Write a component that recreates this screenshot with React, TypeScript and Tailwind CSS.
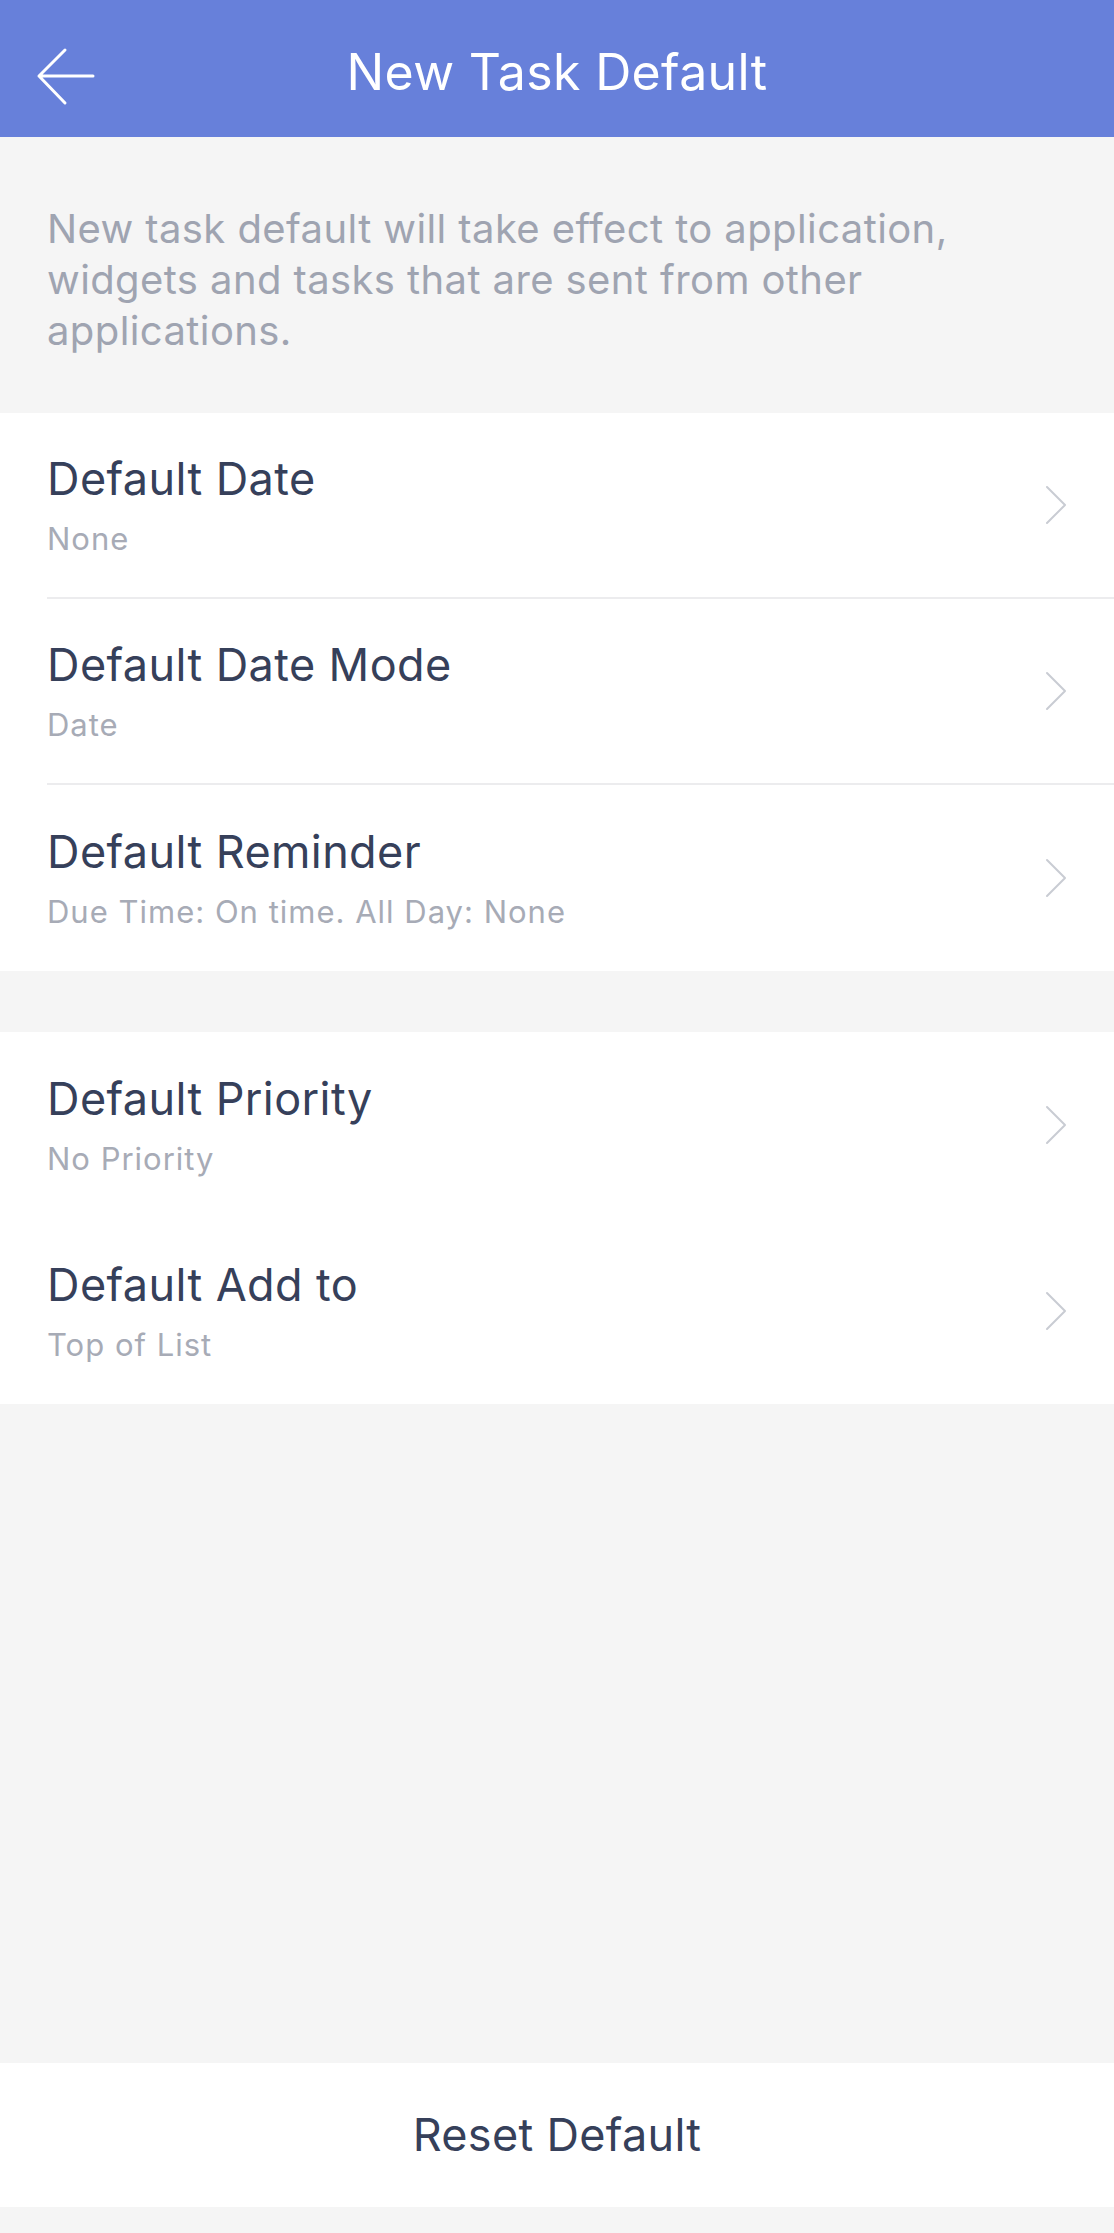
import React from "react";

interface Setting {
    title: string,
    value: string
}

const firstGroup: Setting[] = [
    { title: "Default Date", value: "None" },
    { title: "Default Date Mode", value: "Date" },
    { title: "Default Reminder", value: "Due Time: On time. All Day: None" },
]

const secondGroup: Setting[] = [
    { title: "Default Priority", value: "No Priority" },
    { title: "Default Add to", value: "Top of List" },
]

const Chevron = () => (
    <svg width="24" height="40" viewBox="0 0 24 40" fill="none" className="shrink-0">
        <path d="M3 2 L21 20 L3 38" stroke="#c9ccd3" strokeWidth="2" strokeLinecap="round" strokeLinejoin="round" />
    </svg>
)

const SettingRow: React.FC<{ item: Setting, divider: boolean }> = ({ item, divider }) => {
    return (
        <div className="flex h-[186px] flex-row items-center pl-[47px]">
            <div className={`flex h-full flex-1 flex-row items-center pr-[46px] ${divider ? "border-b-2 border-[#ececee]" : ""}`}>
                <div className="flex flex-1 flex-col">
                    <span className="text-[45px] leading-[54px] tracking-[0.4px] text-[#36405a]">{item.title}</span>
                    <span className="mt-[14px] text-[31px] leading-[38px] tracking-[1px] text-[#a7abb6]">{item.value}</span>
                </div>
                <Chevron />
            </div>
        </div>
    )
}

export default function App() {
    return (
        <div className="flex min-h-screen w-full flex-col bg-[#f5f5f5] font-['Inter','Liberation_Sans',sans-serif]">
            <div className="relative flex h-[137px] items-center justify-center bg-[#6780da] pt-[6px]">
                <svg width="60" height="60" viewBox="0 0 60 60" fill="none" className="absolute left-[36px] top-[46px]">
                    <path d="M3 30 L57 30 M29 4 L3 30 L29 57" stroke="white" strokeWidth="3" strokeLinecap="round" strokeLinejoin="round" />
                </svg>
                <span className="text-[50px] leading-[60px] tracking-[0.35px] text-white">New Task Default</span>
            </div>

            <p className="px-[47px] pb-[57px] pt-[66px] text-[40px] leading-[51px] tracking-[0.4px] text-[#9fa4b1]">
                New task default will take effect to application, widgets and tasks that are sent from other applications.
            </p>

            <div className="flex flex-col bg-white">
                {firstGroup.map((item, index) => (
                    <SettingRow key={index} item={item} divider={index < firstGroup.length - 1} />
                ))}
            </div>

            <div className="mt-[61px] flex flex-col bg-white">
                {secondGroup.map((item, index) => (
                    <SettingRow key={index} item={item} divider={false} />
                ))}
            </div>

            <div className="flex-1"></div>

            <button className="flex h-[144px] w-full items-center justify-center bg-white text-[45px] tracking-[0.3px] text-[#36405a]">
                Reset Default
            </button>
            <div className="h-[26px]"></div>
        </div>
    );
}
